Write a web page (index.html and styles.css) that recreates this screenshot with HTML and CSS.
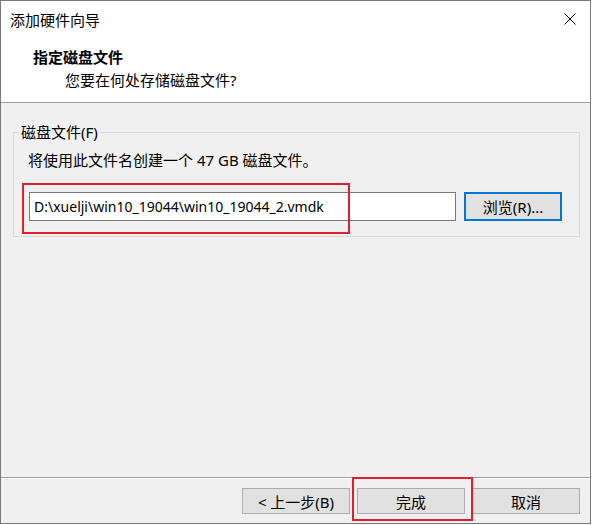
FILE: index.html
```html
<!DOCTYPE html>
<html lang="zh-CN">
<head>
<meta charset="utf-8">
<title>添加硬件向导</title>
<link rel="stylesheet" href="styles.css">
</head>
<body>
<div class="window">
  <div class="titlebar">
    <span class="title">添加硬件向导</span>
    <svg class="close" width="12" height="12" viewBox="0 0 12 12"><path d="M0.5 0.5 L11.5 11.5 M11.5 0.5 L0.5 11.5" stroke="#000" stroke-width="1" fill="none"/></svg>
  </div>
  <div class="header">
    <div class="heading">指定磁盘文件</div>
    <div class="subheading">您要在何处存储磁盘文件?</div>
  </div>
  <div class="content">
    <div class="group">
      <div class="group-label">磁盘文件(F)</div>
      <div class="desc">将使用此文件名创建一个 47 GB 磁盘文件。</div>
      <div class="file-row">
        <div class="field">D:\xuelji\win10_19044\win10_19044_2.vmdk</div>
        <div class="btn btn-focus">浏览(R)...</div>
      </div>
    </div>
  </div>
  <div class="footer">
    <div class="btn btn-wide">&lt; 上一步(B)</div>
    <div class="btn btn-wide">完成</div>
    <div class="btn btn-wide">取消</div>
  </div>
  <div class="mark mark-field"></div>
  <div class="mark mark-finish"></div>
</div>
</body>
</html>
```
FILE: styles.css
```css
html, body {
  margin: 0;
  padding: 0;
  background: #ffffff;
}
body {
  font-family: "Noto Sans", "Noto Sans CJK SC", sans-serif;
  font-size: 15px;
  color: #000;
}
.window {
  position: relative;
  width: 589px;
  height: 522px;
  border: 1px solid #7a7a7a;
  background: #f0f0f0;
  display: flex;
  flex-direction: column;
}
.titlebar {
  height: 37px;
  background: #fff;
  display: flex;
  align-items: center;
  justify-content: space-between;
  padding: 0 14px 0 9px;
  flex: none;
}
.title {
  line-height: 20px;
}
.close {
  display: block;
  margin-top: -2px;
}
.header {
  background: #fff;
  padding: 10px 0 13px 32px;
  border-bottom: 1px solid #a0a0a0;
  flex: none;
}
.heading {
  font-weight: bold;
  line-height: 18px;
}
.subheading {
  line-height: 18px;
  margin-top: 5px;
  padding-left: 32px;
}
.content {
  flex: 1;
  padding: 29px 10px 0 12px;
}
.group {
  border: 1px solid #d9d9d9;
  padding: 0 16px 15px 14px;
}
.group-label {
  width: fit-content;
  margin: -10px 0 0 -9px;
  padding: 0 2px;
  line-height: 18px;
  background: #f0f0f0;
}
.desc {
  margin-top: 10px;
  line-height: 18px;
}
.file-row {
  display: flex;
  gap: 8px;
  margin-top: 23px;
  padding-left: 1px;
}
.field {
  width: 421px;
  height: 27px;
  border: 1px solid #7a7a7a;
  background: #fff;
  padding-left: 4px;
  font-size: 14px;
  line-height: 27px;
  box-sizing: content-box;
}
.btn {
  box-sizing: border-box;
  height: 29px;
  width: 98px;
  background: #e1e1e1;
  border: 1px solid #adadad;
  display: flex;
  align-items: center;
  justify-content: center;
}
.btn-focus {
  border: 2px solid #0078d7;
}
.footer {
  flex: none;
  border-top: 1px solid #a0a0a0;
  box-shadow: inset 0 1px 0 #fff;
  display: flex;
  justify-content: flex-end;
  gap: 7px;
  padding: 10px 10px 9px 0;
}
.btn-wide {
  width: 108px;
  height: 26px;
}
.mark {
  position: absolute;
  border: 2px solid #e0202e;
  box-sizing: border-box;
}
.mark-field {
  left: 21px;
  top: 182px;
  width: 328px;
  height: 51px;
}
.mark-finish {
  left: 351px;
  top: 476px;
  width: 121px;
  height: 44px;
}
```
